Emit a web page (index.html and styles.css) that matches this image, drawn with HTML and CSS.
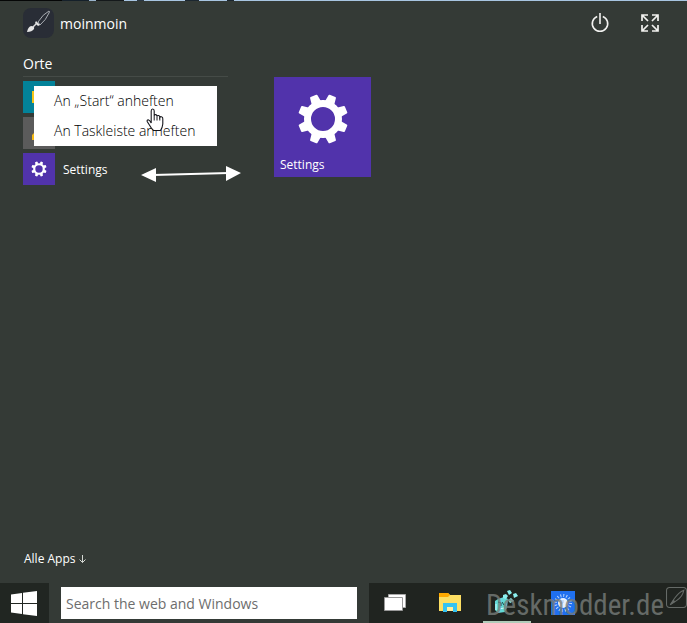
FILE: index.html
```html
<!DOCTYPE html>
<html lang="de">
<head>
<meta charset="utf-8">
<meta name="viewport" content="width=device-width, initial-scale=1">
<title>Start</title>
<link rel="stylesheet" href="styles.css">
</head>
<body>
<svg class="defs" aria-hidden="true">
  <symbol id="gear" viewBox="-26 -26 52 52">
    <circle r="15.5" fill="none" stroke="#fff" stroke-width="7"/>
    <g fill="#fff">
      <path id="tooth" d="M-5-17 -4-24Q-3.9-25-3-25H3Q3.9-25 4-24L5-17z" transform="rotate(22.5)"/>
      <use href="#tooth" transform="rotate(45)"/>
      <use href="#tooth" transform="rotate(90)"/>
      <use href="#tooth" transform="rotate(135)"/>
      <use href="#tooth" transform="rotate(180)"/>
      <use href="#tooth" transform="rotate(225)"/>
      <use href="#tooth" transform="rotate(270)"/>
      <use href="#tooth" transform="rotate(315)"/>
    </g>
  </symbol>
  <symbol id="brush" viewBox="0 0 30 30">
    <path d="M15 14Q20 6 26 3Q27 3 26 5Q23 12 17 17z" fill="none" stroke="#a9adb3" stroke-width="1"/>
    <path d="M13 13 17 17 15 18 12 15z" fill="#e6e6e6"/>
    <path d="M4 24Q5 19 8 18Q12 18 11 21Q9 24 4 24z" fill="#e6e6e6"/>
    <path d="M10 19 14 15" stroke="#ddd" stroke-width="1.500"/>
  </symbol>
</svg>

<main class="start">
  <header class="top">
    <button class="user" type="button">
      <span class="avatar"><svg viewBox="0 0 30 30"><use href="#brush"/></svg></span>
      <span>moinmoin</span>
    </button>
    <div class="actions">
      <button class="action" type="button" aria-label="Ein/Aus">
        <svg viewBox="0 0 20 20" fill="none" stroke="#f2f2f0" stroke-width="1.600"><path d="M7.200 3.400A7.700 7.700 0 1 0 12.800 3.400M10 0V11"/></svg>
      </button>
      <button class="action" type="button" aria-label="Vollbild">
        <svg viewBox="0 0 20 20" fill="none" stroke="#f2f2f0" stroke-width="1.700"><path d="M2 8V2H8M2 2 8 8M12 2H18V8M18 2 12 8M2 12V18H8M2 18 8 12M12 18H18V12M18 18 12 12"/></svg>
      </button>
    </div>
  </header>

  <div class="columns">
    <section class="places">
      <h2>Orte</h2>
      <div class="list">
        <button class="place" type="button" aria-label="Explorer"><span class="icon teal"><svg viewBox="0 0 32 32"><path d="M9 10H23V22H9z" fill="#f5c518"/></svg></span></button>
        <button class="place" type="button" aria-label="Ordner"><span class="icon grey"><svg viewBox="0 0 32 32"><path d="M9 18 12 15H23V23H9z" fill="#f5b914"/></svg></span></button>
        <button class="place" type="button"><span class="icon purple"><svg class="small-gear"><use href="#gear"/></svg></span><span>Settings</span></button>
        <div class="menu" role="menu">
          <button type="button" role="menuitem">An „Start“ anheften</button>
          <button type="button" role="menuitem">An Taskleiste anheften</button>
          <svg class="cursor" viewBox="0 0 18 24"><path d="M5.200 15V3Q5.200 1 6.700 1Q8.200 1 8.200 3V8Q8.400 6.400 9.800 6.600Q11 6.800 11 8.400Q11.400 7.200 12.600 7.500Q13.800 7.800 13.800 9.400Q14.400 8.400 15.500 8.800Q17 9.300 16.800 11V16Q16.400 20 14.500 22.500H7.500Q5 20 3.400 17L1.200 13.500Q.8 12 2.200 11.800Q3.600 12 5.200 15z" fill="#fff" stroke="#16161c" stroke-width="1.100"/><path d="M8.200 8V12.500M11 8.500V12.500M13.800 9.500V12.500" stroke="#16161c"/></svg>
        </div>
        <svg class="arrow" viewBox="0 0 100 16"><path d="M12 9 88 7" stroke="#fff" stroke-width="2"/><path d="M0 9 15 2V16zM100 7 85 0V15z" fill="#fff"/></svg>
      </div>
    </section>
    <button class="tile" type="button"><svg><use href="#gear"/></svg><span>Settings</span></button>
  </div>

  <a class="all" href="#">Alle Apps <svg viewBox="0 0 7 9" fill="none" stroke="#d5d8d4"><path d="M3.500 0V7.500M.5 4.500 3.500 7.500 6.500 4.500"/></svg></a>
</main>

<footer class="taskbar">
  <button class="win" type="button" aria-label="Start"><svg viewBox="0 0 26 25" fill="#fff"><path d="M0 3.600 11 2V12H0zM12 1.800 26 0V12H12zM0 13H11V23L0 21.400zM12 13H26V25L12 23.200z"/></svg></button>
  <div class="search"><input type="search" aria-label="Suche" placeholder="Search the web and Windows"></div>
  <nav class="tasks">
    <button type="button" aria-label="Task View"><svg viewBox="0 0 24 24"><path d="M5.500 3.500H22.500V16.500H5.500z" fill="#fff" stroke="#aaa"/><path d="M1.500 6.500H19.500V19.500H1.500z" fill="#fff" stroke="#999"/></svg></button>
    <button type="button" aria-label="Explorer"><svg viewBox="0 0 24 24"><path d="M0 2H9L11 4H22V20H0z" fill="#fddf63"/><path d="M0 2H9L11 4 9 6H0z" fill="#ffa900"/><path d="M4 21V12H18V21H14V16H8V21z" fill="#35c3f2"/><path d="M8 16H14V20H8z" fill="#fff0a0"/></svg></button>
    <button class="active" type="button" aria-label="Registry"><svg viewBox="0 0 24 24"><path d="M0 11 3 9 9 7 13 9 12 17 10 22 3 23 0 20z" fill="#63d8d8"/><path d="M3 12 6 13V16M7 12 9 15" stroke="#17494b" fill="none"/><path d="M1 14V20M4 19 9 18" stroke="#c8ffff" fill="none"/><path d="M8 5 11 4 13 6 11 9 8 8zM12 1 15 0 17 3 14 5zM18 4 21 3 23 6 19 8zM13 10 16 8 19 11 15 13z" fill="#8cf0ef"/></svg></button>
    <button type="button" aria-label="App"><svg viewBox="0 0 24 24"><path d="M0 0H24V24H0z" fill="#1f70ef"/><circle cx="12" cy="12" r="7.500" fill="none" stroke="#b5d2fb" stroke-width="3" stroke-dasharray="1 1.950"/><circle cx="12" cy="12" r="5" fill="#e8f2ff"/><path d="M12 9V12H9" stroke="#adc7ea" fill="none"/></svg></button>
  </nav>
  <div class="mark"><span>Deskmodder.de</span><svg viewBox="0 0 20 20"><rect x=".5" y=".5" width="19" height="19" rx="3" fill="none" stroke="#777c79"/><path d="M4 17 8 11Q12 5 17 3Q16 9 10 13z" fill="none" stroke="#777c79"/><path d="M4 17 7 12 9 14z" fill="#777c79"/></svg></div>
</footer>
</body>
</html>
```
FILE: styles.css
```css
* {
  box-sizing: border-box;
}

body {
  margin: 0;
  min-height: 100vh;
  display: flex;
  flex-direction: column;
  background: #343a36;
  color: #fff;
  font-family: "Open Sans", "Noto Sans", sans-serif;
  font-size: 12px;
}

button {
  padding: 0;
  border: 0;
  background: none;
  color: inherit;
  font: inherit;
  text-align: left;
}

svg {
  display: block;
  overflow: visible;
}

.defs {
  position: absolute;
  width: 0;
  height: 0;
}

.start {
  flex: 1;
  display: flex;
  flex-direction: column;
  background: linear-gradient(90deg, #050606 9%, #15202a 9% 13%, #9ab4cc 13% 14%, #15191b 14% 18%, #a8c5e2 18% 20%, #2b3844 20% 21%, #a8c5e2 21% 27%, #1c2730 27% 29%, #a8c5e2 29% 33%, #1c2730 33% 34%, #a8c5e2 34%) top / 100% 1px no-repeat;
  padding: 8px 23px 16px;
}

.top {
  display: flex;
  justify-content: space-between;
  align-items: center;
}

.user {
  display: flex;
  align-items: center;
  gap: 6px;
  font-size: 14px;
}

.avatar {
  width: 31px;
  height: 30px;
  border-radius: 8px;
  background: #292d36;
}

.avatar svg {
  width: 30px;
  height: 30px;
}

.actions {
  display: flex;
  gap: 26px;
  padding-right: 2px;
}

.action {
  width: 24px;
  height: 24px;
  display: grid;
  place-items: center;
}

.action svg {
  width: 20px;
  height: 20px;
}

.columns {
  flex: 1;
  display: flex;
  align-items: flex-start;
  gap: 46px;
  padding-top: 15px;
}

.places {
  width: 205px;
}

h2 {
  margin: 0 0 4px;
  padding-top: 1px;
  padding-bottom: 2px;
  border-bottom: 1px solid #454b47;
  font-size: 14px;
  font-weight: 400;
  line-height: 20px;
}

.list {
  position: relative;
  display: flex;
  flex-direction: column;
  gap: 4px;
}

.place {
  display: flex;
  align-items: center;
  gap: 8px;
}

.icon {
  width: 32px;
  height: 32px;
  display: grid;
  place-items: center;
}

.icon svg {
  width: 32px;
  height: 32px;
}

.icon .small-gear {
  width: 16px;
  height: 16px;
}

.teal {
  background: #038299;
}

.grey {
  background: #5b5b5b;
}

.purple,
.tile {
  background: #5133ab;
}

.menu {
  position: absolute;
  top: 5px;
  left: 11px;
  width: 183px;
  display: flex;
  flex-direction: column;
  background: #fff;
  color: #000;
  font-size: 14px;
  font-weight: 300;
}

.menu button {
  padding-left: 20px;
  line-height: 30px;
  white-space: nowrap;
}

.cursor {
  position: absolute;
  top: 22px;
  left: 112px;
  width: 18px;
  height: 24px;
}

.arrow {
  position: absolute;
  top: 85px;
  left: 118px;
  width: 100px;
  height: 16px;
}

.tile {
  width: 97px;
  height: 100px;
  margin-top: 24px;
  padding: 16px 6px 4px;
  display: flex;
  flex-direction: column;
  justify-content: space-between;
}

.tile svg {
  width: 52px;
  height: 52px;
  align-self: center;
}

.all {
  display: flex;
  align-items: center;
  gap: 3px;
  padding-left: 1px;
  color: inherit;
  line-height: 16px;
  text-decoration: none;
}

.all svg {
  width: 7px;
  height: 9px;
}

.taskbar {
  position: relative;
  height: 40px;
  display: flex;
  background: #343a36;
}

.win {
  width: 49px;
  padding-left: 11px;
  background: #212622;
}

.win svg {
  width: 26px;
  height: 25px;
}

.search {
  padding: 4px 12px;
}

.search input {
  width: 296px;
  height: 32px;
  padding: 0 5px;
  border: 0;
  border-radius: 0;
  background: #fff;
  color: #333;
  font: inherit;
  font-size: 14px;
}

.search input::placeholder {
  color: #6d6d6d;
}

.tasks {
  flex: 1;
  display: flex;
  gap: 8px;
  padding-left: 2px;
  background: #202420;
}

.tasks button {
  width: 48px;
  display: grid;
  place-items: center;
}

.tasks svg {
  width: 24px;
  height: 24px;
}

.tasks .active {
  border-bottom: 2px solid #b0cbb9;
}

.mark {
  position: absolute;
  right: 0;
  bottom: 0;
  display: flex;
  align-items: flex-start;
  gap: 2px;
  color: #777c79;
  font-family: "Roboto Condensed", Roboto, sans-serif;
  font-size: 29px;
  line-height: 36px;
  opacity: 0.8;
  pointer-events: none;
}

.mark svg {
  width: 21px;
  height: 21px;
}
```
